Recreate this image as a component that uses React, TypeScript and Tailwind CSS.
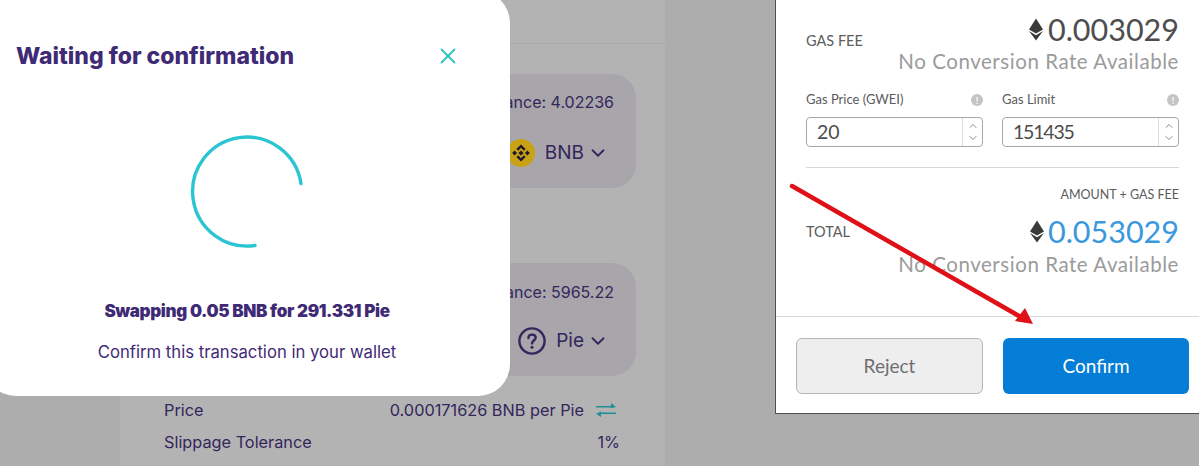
import React from 'react';
import { X, ChevronDown, ChevronUp } from 'lucide-react';

const swapFont = "font-['Inter','Noto_Sans',sans-serif]";
const walletFont = "font-['Lato','Open_Sans',sans-serif]";

const EthIcon: React.FC<{ className?: string }> = ({ className }) => (
  <svg viewBox="0 0 14 22" className={className}>
    <path d="M7 0 L14 11 L7 15 L0 11 Z" fill="#3a3a3a" />
    <path d="M0 12.6 L7 16.7 L14 12.6 L7 22 Z" fill="#3a3a3a" />
  </svg>
);

const BnbIcon: React.FC = () => (
  <svg viewBox="0 0 28 28" className="w-[28px] h-[28px]">
    <circle cx="14" cy="14" r="14" fill="#c9a114" />
    <g fill="#1c1730">
      <path d="M14 5.5 L18.6 10 L16.9 11.7 L14 8.8 L11.1 11.7 L9.4 10 Z" />
      <path d="M14 22.5 L18.6 18 L16.9 16.3 L14 19.2 L11.1 16.3 L9.4 18 Z" />
      <path d="M14 11.4 L16.6 14 L14 16.6 L11.4 14 Z" />
      <path d="M7.6 11.6 L10 14 L7.6 16.4 L5.2 14 Z" />
      <path d="M20.4 11.6 L22.8 14 L20.4 16.4 L18 14 Z" />
    </g>
  </svg>
);

const QuestionIcon: React.FC = () => (
  <svg viewBox="0 0 28 28" className="w-[28px] h-[28px]" fill="none" stroke="#33265c" strokeWidth="2.4" strokeLinecap="round">
    <circle cx="14" cy="14" r="12.6" />
    <path d="M10.4 11 C10.4 8.8 12 7.6 14 7.6 C16.2 7.6 17.7 9 17.7 10.8 C17.7 13.4 14 13.6 14 16.4" />
    <path d="M14 20.2 L14 20.3" strokeWidth="3" />
  </svg>
);

const SwapArrows: React.FC = () => (
  <svg viewBox="0 0 20 16" className="w-[20px] h-[16px]" fill="#1f8f93">
    <path d="M0 4 H15 V1 L20 5 L15 6.2 V5.6 H0 Z" />
    <path d="M20 10.4 H5 V9.6 L0 11.8 L5 15 V12 H20 Z" />
  </svg>
);

const InfoDot: React.FC = () => (
  <span className="w-[12px] h-[12px] rounded-full bg-[#c4c4c4] flex items-center justify-center text-white text-[9px] font-bold leading-none">!</span>
);

const TokenPanel: React.FC<{ balance: string; symbol: string; icon: React.ReactNode; className: string; rowClass: string }> = ({ balance, symbol, icon, className, rowClass }) => (
  <div className={`w-[516px] rounded-[24px] bg-[#a8a5ab] pr-[22px] text-[#33265c] flex flex-col items-end ${className}`}>
    <p className="text-[16px] leading-[20px]">Balance: {balance}</p>
    <div className={`flex items-center mr-[5px] ${rowClass}`}>
      {icon}
      <span className="ml-[10px] text-[19px] leading-[28px]">{symbol}</span>
      <ChevronDown className="w-[22px] h-[22px] ml-[3px]" strokeWidth={2} />
    </div>
  </div>
);

const GasInput: React.FC<{ label: string; value: string; valueClass: string }> = ({ label, value, valueClass }) => (
  <div className="w-[177px]">
    <div className="flex items-center justify-between h-[17px] pt-[1px]">
      <span className="text-[13px] text-[#5b5b5b]">{label}</span>
      <InfoDot />
    </div>
    <div className="mt-[9px] h-[30px] border border-[#a9a9a9] rounded-[4px] flex">
      <div className={`flex-1 leading-[28px] text-[#4d4d4d] ${valueClass}`}>{value}</div>
      <div className="w-[20px] border-l border-[#dcdcdc] flex flex-col items-center justify-center text-[#8a8a8a]">
        <ChevronUp className="w-[12px] h-[12px]" strokeWidth={2} />
        <ChevronDown className="w-[12px] h-[12px]" strokeWidth={2} />
      </div>
    </div>
  </div>
);

const WaitingModal: React.FC = () => (
  <div className={`absolute -left-[16px] -top-[9px] w-[526px] h-[405px] bg-white rounded-[32px] text-[#3f2a75] ${swapFont}`}>
    <div className="flex items-center justify-between pl-[32px] pr-[49px] pt-[50px]">
      <h2 className="text-[23px] leading-[30px] font-extrabold">Waiting for confirmation</h2>
      <X className="w-[26px] h-[26px] text-[#2cc3c8]" strokeWidth={1.7} />
    </div>
    <div className="flex justify-center mt-[63px] pr-[1px]">
      <svg viewBox="0 0 116 116" className="w-[116px] h-[116px]" fill="none">
        <path d="M 112 49.5 A 54.5 54.5 0 1 0 66 111.5" stroke="#2ac5d3" strokeWidth="3.4" strokeLinecap="round" />
      </svg>
    </div>
    <p className="mt-[51px] text-center text-[17px] leading-[20px] font-black tracking-[-0.35px]">Swapping 0.05 BNB for 291.331 Pie</p>
    <p className="mt-[20px] text-center text-[16.7px] leading-[22px]">Confirm this transaction in your wallet</p>
  </div>
);

const WalletPanel: React.FC = () => (
  <div className={`w-[424px] h-[414px] bg-white border-l border-b border-[#4f4f4f] flex flex-col shrink-0 ${walletFont}`}>
    <div className="flex-1 pl-[30px] pr-[20px]">
      <div className="flex justify-between pt-[11px]">
        <span className="text-[14.5px] text-[#5c5c5c] mt-[19px]">GAS FEE</span>
        <div className="flex flex-col items-end">
          <div className="flex items-center">
            <EthIcon className="w-[14px] h-[23px] mr-[5px]" />
            <span className="text-[30.5px] leading-[36px] text-[#4d4d4d]">0.003029</span>
          </div>
          <span className="text-[20.5px] leading-[26px] tracking-[0.55px] text-[#9b9b9b] mt-[1px]">No Conversion Rate Available</span>
        </div>
      </div>
      <div className="flex justify-between mt-[17px]">
        <GasInput label="Gas Price (GWEI)" value="20" valueClass="pl-[10px] text-[19.5px]" />
        <GasInput label="Gas Limit" value="151435" valueClass="pl-[10px] text-[19.5px] tracking-[-1.2px]" />
      </div>
      <div className="h-px bg-[#d8d8d8] mt-[20px]" />
      <p className="text-right text-[12.5px] leading-[16px] text-[#5c5c5c] mt-[19px]">AMOUNT + GAS FEE</p>
      <div className="flex justify-between mt-[10px]">
        <span className="text-[14.5px] text-[#5c5c5c] mt-[8px]">TOTAL</span>
        <div className="flex flex-col items-end">
          <div className="flex items-center">
            <EthIcon className="w-[14px] h-[23px] mr-[4px]" />
            <span className="text-[30.5px] leading-[36px] text-[#3a98de]">0.053029</span>
          </div>
          <span className="text-[20.5px] leading-[26px] tracking-[0.55px] text-[#9b9b9b] mt-[2px]">No Conversion Rate Available</span>
        </div>
      </div>
    </div>
    <div className="border-t border-[#d8d8d8] h-[97px] pl-[20px] pr-[9px] pt-[21px] flex gap-[20px] shrink-0">
      <button className="w-[187px] h-[56px] rounded-[6px] bg-[#eeeeee] border border-[#b5b5b5] text-[19px] text-[#6e6e6e]">Reject</button>
      <button className="w-[186px] h-[56px] rounded-[6px] bg-[#037dd6] text-[19px] text-white">Confirm</button>
    </div>
  </div>
);

export default function App() {
  return (
    <div className="relative w-[1199px] h-[466px] overflow-hidden bg-[#adadad] flex items-start">
      <div className="relative w-[775px] h-[466px] shrink-0">
        <div className={`ml-[120px] w-[545px] h-[466px] bg-[#b3b3b3] ${swapFont}`}>
          <div className="h-[44px] border-b border-[#a8a8a8]" />
          <TokenPanel className="mt-[30px] h-[114px] pt-[18px]" rowClass="mt-[27px]" balance="4.02236" symbol="BNB" icon={<BnbIcon />} />
          <TokenPanel className="mt-[75px] h-[113px] pt-[19px]" rowClass="mt-[25px]" balance="5965.22" symbol="Pie" icon={<QuestionIcon />} />
          <div className="pl-[44px] pr-[45px] mt-[22px] text-[16.3px] text-[#33265c]">
            <div className="flex justify-between items-center h-[24px]">
              <span>Price</span>
              <span className="flex items-center gap-[12px] pr-[4px]">0.000171626 BNB per Pie <SwapArrows /></span>
            </div>
            <div className="flex justify-between items-center h-[24px] mt-[8px]">
              <span>Slippage Tolerance</span>
              <span>1%</span>
            </div>
          </div>
        </div>
        <WaitingModal />
      </div>
      <WalletPanel />
      {/* red annotation arrow drawn over the wallet */}
      <svg className="absolute left-[785px] top-[180px] w-[260px] h-[150px]" viewBox="0 0 260 150">
        <path d="M7 6 L234 136" stroke="#e01018" strokeWidth="4.5" strokeLinecap="round" />
        <path d="M248 144 L230 141 L240 128 Z" fill="#e01018" />
      </svg>
    </div>
  );
}
